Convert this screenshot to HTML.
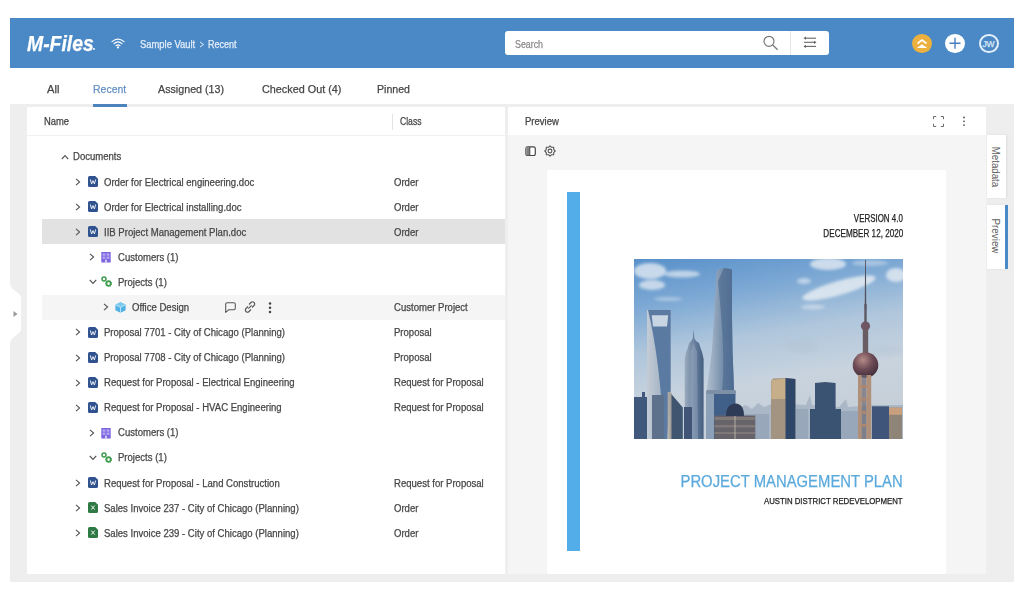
<!DOCTYPE html>
<html><head><meta charset="utf-8">
<style>
*{margin:0;padding:0;box-sizing:border-box}
html,body{width:1024px;height:594px;overflow:hidden;background:#fff;font-family:"Liberation Sans",sans-serif;color:#333}
.a{position:absolute;white-space:nowrap;-webkit-text-stroke:0.25px currentColor}
</style></head><body>
<div class="a" style="left:10px;top:18px;width:1004px;height:49.8px;background:#4b89c6"></div>
<div class="a" style="left:27px;top:31px;height:26px;line-height:26px;font-size:22px;font-weight:bold;font-style:italic;color:#fff;transform:scaleX(0.88);transform-origin:0 50%">M-Files</div>
<div class="a" style="left:93px;top:48px;width:2px;height:2px;border-radius:1px;background:#fff"></div>
<svg class="a" style="left:111px;top:38px" width="14" height="11" viewBox="0 0 14 11"><g fill="none" stroke="#fff" stroke-width="1.2" stroke-linecap="round"><path d="M1 3.6 Q7 -1.4 13 3.6"/><path d="M3 5.6 Q7 2.2 11 5.6"/><path d="M5 7.6 Q7 6 9 7.6"/></g><circle cx="7" cy="9.4" r="1.1" fill="#fff"/></svg>
<div class="a" style="left:140px;top:34.8px;height:20px;line-height:20px;font-size:10px;color:#e3edf8;font-weight:normal;transform:scaleX(0.94);transform-origin:0 50%;">Sample Vault</div>
<svg class="a" style="left:199px;top:41px" width="6" height="7" viewBox="0 0 6 7"><path d="M1 1 L4.6 3.5 L1 6" fill="none" stroke="#e3edf8" stroke-width="1"/></svg><div class="a" style="left:208px;top:34.8px;height:20px;line-height:20px;font-size:10px;color:#e3edf8;font-weight:normal;transform:scaleX(0.9);transform-origin:0 50%;">Recent</div>

<div class="a" style="left:505px;top:31px;width:324px;height:24px;background:#fff;border-radius:3px"></div>
<div class="a" style="left:515px;top:34.7px;height:20px;line-height:20px;font-size:10px;color:#8a8a8a;font-weight:normal;transform:scaleX(0.885);transform-origin:0 50%;">Search</div>

<svg class="a" style="left:762px;top:35px" width="17" height="16" viewBox="0 0 17 16"><circle cx="7" cy="6.3" r="5" fill="none" stroke="#777" stroke-width="1.2"/><path d="M10.6 9.9 L15.6 14.8" stroke="#777" stroke-width="1.3"/></svg>
<div class="a" style="left:790px;top:31px;width:1px;height:24px;background:#e6e6e6"></div>
<svg class="a" style="left:803px;top:36px" width="14" height="13" viewBox="0 0 14 13"><g stroke="#666" stroke-width="1.1" fill="#666"><path d="M1.5 2.2 H13"/><path d="M1 6.3 H12.5"/><path d="M1.5 10.4 H13"/></g><g fill="#666"><path d="M0.5 2.2 L3 0.6 V3.8Z"/><path d="M13.5 6.3 L11 4.7 V7.9Z"/><path d="M0.5 10.4 L3 8.8 V12Z"/></g></svg>
<div class="a" style="left:912px;top:33.5px;width:20px;height:19.5px;border-radius:50%;background:#ebb03e"></div>
<svg class="a" style="left:912px;top:33.5px" width="20" height="20" viewBox="0 0 20 20"><path d="M5.5 9.5 L10 6 L14.5 9.5" fill="none" stroke="#fff" stroke-width="1.6"/><path d="M4.8 14 L10 10.2 L15.2 14Z" fill="#fff"/></svg>
<div class="a" style="left:945px;top:33.5px;width:20px;height:19.5px;border-radius:50%;background:#fff"></div>
<svg class="a" style="left:945px;top:33.3px" width="20" height="20" viewBox="0 0 20 20"><path d="M4.5 10.3 H15.5 M10 4.8 V15.8" stroke="#4a7fbf" stroke-width="1.4"/></svg>
<div class="a" style="left:978.5px;top:33.5px;width:20px;height:19.5px;border-radius:50%;border:2px solid #e2eefa"></div>
<div class="a" style="left:978.5px;top:33.5px;width:20px;height:20px;line-height:20px;text-align:center;font-size:8.5px;color:#dce9f6;letter-spacing:-0.2px">JW</div>

<div class="a" style="left:47px;top:79px;height:20px;line-height:20px;font-size:11.4px;color:#444;font-weight:normal;transform:scaleX(0.98);transform-origin:0 50%;">All</div>

<div class="a" style="left:93px;top:79px;height:20px;line-height:20px;font-size:11.4px;color:#6591c4;font-weight:normal;transform:scaleX(0.92);transform-origin:0 50%;">Recent</div>

<div class="a" style="left:158px;top:79px;height:20px;line-height:20px;font-size:11.4px;color:#444;font-weight:normal;transform:scaleX(0.94);transform-origin:0 50%;">Assigned (13)</div>

<div class="a" style="left:262px;top:79px;height:20px;line-height:20px;font-size:11.4px;color:#444;font-weight:normal;transform:scaleX(0.95);transform-origin:0 50%;">Checked Out (4)</div>

<div class="a" style="left:377px;top:79px;height:20px;line-height:20px;font-size:11.4px;color:#444;font-weight:normal;transform:scaleX(0.93);transform-origin:0 50%;">Pinned</div>


<div class="a" style="left:10px;top:104px;width:1004px;height:478px;background:#eeeeee"></div>
<div class="a" style="left:93px;top:104px;width:34px;height:2.7px;background:#4c83bd"></div>
<svg class="a" style="left:10px;top:283px" width="11" height="61" viewBox="0 0 11 61"><path d="M0 0 Q0 4 4 7 L9 11 Q11 12.5 11 15 V46 Q11 48.5 9 50 L4 54 Q0 57 0 61Z" fill="#fff"/><path d="M3.5 28 L7.5 31 L3.5 34Z" fill="#999"/></svg>

<div class="a" style="left:27px;top:107px;width:478px;height:467px;background:#fff"></div>
<div class="a" style="left:44px;top:112px;height:20px;line-height:20px;font-size:10px;color:#444;font-weight:normal;transform:scaleX(0.94);transform-origin:0 50%;">Name</div>

<div class="a" style="left:392px;top:114px;width:1px;height:16px;background:#e4e4e4"></div>
<div class="a" style="left:400px;top:112px;height:20px;line-height:20px;font-size:10px;color:#444;font-weight:normal;transform:scaleX(0.86);transform-origin:0 50%;">Class</div>

<div class="a" style="left:27px;top:135px;width:478px;height:1px;background:#f2f2f2"></div>
<div class="a" style="left:42px;top:219px;width:463px;height:25px;background:#e2e2e2"></div><div class="a" style="left:42px;top:294.5px;width:463px;height:25.5px;background:#f5f5f5"></div><svg class="a" style="left:61px;top:153.5px" width="8" height="6" viewBox="0 0 8 6"><path d="M0.8 5 L4 1.6 L7.2 5" fill="none" stroke="#555" stroke-width="1.1"/></svg><div class="a" style="left:73px;top:144.46px;height:25px;line-height:25px;font-size:10px;color:#464646;font-weight:normal;transform:scaleX(0.955);transform-origin:0 50%;">Documents</div>
<svg class="a" style="left:74.8px;top:177.9px" width="6" height="8" viewBox="0 0 6 8"><path d="M1 0.8 L4.6 4 L1 7.2" fill="none" stroke="#555" stroke-width="1.1"/></svg><svg class="a" style="left:87.7px;top:176.04000000000002px" width="10" height="11" viewBox="0 0 10 11"><path d="M1.6 0 H7.2 L10 2.8 V9.4 Q10 11 8.4 11 H1.6 Q0 11 0 9.4 V1.6 Q0 0 1.6 0Z" fill="#30528f"/><path d="M2.3 3.4 L3.6 8 L5 4.6 L6.4 8 L7.7 3.4" fill="none" stroke="#e9eef7" stroke-width="1" stroke-linejoin="miter"/></svg><div class="a" style="left:103.6px;top:169.54000000000002px;height:25px;line-height:25px;font-size:10px;color:#464646;font-weight:normal;transform:scaleX(0.955);transform-origin:0 50%;">Order for Electrical engineering.doc</div>
<div class="a" style="left:394px;top:169.54000000000002px;height:25px;line-height:25px;font-size:10px;color:#464646;font-weight:normal;transform:scaleX(0.955);transform-origin:0 50%;">Order</div>
<svg class="a" style="left:74.8px;top:203.0px" width="6" height="8" viewBox="0 0 6 8"><path d="M1 0.8 L4.6 4 L1 7.2" fill="none" stroke="#555" stroke-width="1.1"/></svg><svg class="a" style="left:87.7px;top:201.12px" width="10" height="11" viewBox="0 0 10 11"><path d="M1.6 0 H7.2 L10 2.8 V9.4 Q10 11 8.4 11 H1.6 Q0 11 0 9.4 V1.6 Q0 0 1.6 0Z" fill="#30528f"/><path d="M2.3 3.4 L3.6 8 L5 4.6 L6.4 8 L7.7 3.4" fill="none" stroke="#e9eef7" stroke-width="1" stroke-linejoin="miter"/></svg><div class="a" style="left:103.6px;top:194.62px;height:25px;line-height:25px;font-size:10px;color:#464646;font-weight:normal;transform:scaleX(0.955);transform-origin:0 50%;">Order for Electrical installing.doc</div>
<div class="a" style="left:394px;top:194.62px;height:25px;line-height:25px;font-size:10px;color:#464646;font-weight:normal;transform:scaleX(0.955);transform-origin:0 50%;">Order</div>
<svg class="a" style="left:74.8px;top:228.1px" width="6" height="8" viewBox="0 0 6 8"><path d="M1 0.8 L4.6 4 L1 7.2" fill="none" stroke="#555" stroke-width="1.1"/></svg><svg class="a" style="left:87.7px;top:226.2px" width="10" height="11" viewBox="0 0 10 11"><path d="M1.6 0 H7.2 L10 2.8 V9.4 Q10 11 8.4 11 H1.6 Q0 11 0 9.4 V1.6 Q0 0 1.6 0Z" fill="#30528f"/><path d="M2.3 3.4 L3.6 8 L5 4.6 L6.4 8 L7.7 3.4" fill="none" stroke="#e9eef7" stroke-width="1" stroke-linejoin="miter"/></svg><div class="a" style="left:103.6px;top:219.7px;height:25px;line-height:25px;font-size:10px;color:#464646;font-weight:normal;transform:scaleX(0.955);transform-origin:0 50%;">IIB Project Management Plan.doc</div>
<div class="a" style="left:394px;top:219.7px;height:25px;line-height:25px;font-size:10px;color:#464646;font-weight:normal;transform:scaleX(0.955);transform-origin:0 50%;">Order</div>
<svg class="a" style="left:88.8px;top:253.2px" width="6" height="8" viewBox="0 0 6 8"><path d="M1 0.8 L4.6 4 L1 7.2" fill="none" stroke="#555" stroke-width="1.1"/></svg><svg class="a" style="left:100.7px;top:252.18px" width="10" height="11" viewBox="0 0 10 11"><rect x="0.3" y="0" width="9.4" height="10.5" rx="0.6" fill="#7d65e0"/><rect x="1.6" y="1.5" width="2.8" height="2.2" fill="#b9abf2"/><rect x="1.6" y="4.6" width="2.8" height="2.2" fill="#b9abf2"/><rect x="5.6" y="1.5" width="2.8" height="2.2" fill="#b9abf2"/><rect x="5.6" y="4.6" width="2.8" height="2.2" fill="#b9abf2"/><rect x="4.2" y="7.6" width="1.6" height="2.9" fill="#e6e0fb"/></svg><div class="a" style="left:117.6px;top:244.78px;height:25px;line-height:25px;font-size:10px;color:#464646;font-weight:normal;transform:scaleX(0.955);transform-origin:0 50%;">Customers (1)</div>
<svg class="a" style="left:88.5px;top:279.3px" width="8" height="6" viewBox="0 0 8 6"><path d="M0.8 1 L4 4.4 L7.2 1" fill="none" stroke="#555" stroke-width="1.1"/></svg><svg class="a" style="left:101px;top:276.16px" width="11" height="11" viewBox="0 0 11 11"><circle cx="3" cy="3" r="2" fill="none" stroke="#3f9c4c" stroke-width="1.5"/><circle cx="7.6" cy="7.6" r="2.2" fill="none" stroke="#3f9c4c" stroke-width="1.7"/><circle cx="7.6" cy="7.6" r="3.1" fill="none" stroke="#3f9c4c" stroke-width="1" stroke-dasharray="1.1 1.1"/></svg><div class="a" style="left:117.6px;top:269.86px;height:25px;line-height:25px;font-size:10px;color:#464646;font-weight:normal;transform:scaleX(0.955);transform-origin:0 50%;">Projects (1)</div>
<svg class="a" style="left:102.8px;top:303.3px" width="6" height="8" viewBox="0 0 6 8"><path d="M1 0.8 L4.6 4 L1 7.2" fill="none" stroke="#555" stroke-width="1.1"/></svg><svg class="a" style="left:115px;top:301.9px" width="11" height="11" viewBox="0 0 11 11"><path d="M5.5 0.2 L10.6 2.7 V8.3 L5.5 10.8 L0.4 8.3 V2.7Z" fill="#4fb0e3"/><path d="M5.5 0.2 L10.6 2.7 L5.5 5.3 L0.4 2.7Z" fill="#7ccaf0"/><path d="M0.6 2.8 L5.5 5.3 L10.4 2.8 M5.5 5.3 V10.6" fill="none" stroke="#e8f6fd" stroke-width="0.7"/></svg><div class="a" style="left:131.6px;top:294.94px;height:25px;line-height:25px;font-size:10px;color:#464646;font-weight:normal;transform:scaleX(0.955);transform-origin:0 50%;">Office Design</div>
<div class="a" style="left:394px;top:294.94px;height:25px;line-height:25px;font-size:10px;color:#464646;font-weight:normal;transform:scaleX(0.955);transform-origin:0 50%;">Customer Project</div>
<svg class="a" style="left:74.8px;top:328.4px" width="6" height="8" viewBox="0 0 6 8"><path d="M1 0.8 L4.6 4 L1 7.2" fill="none" stroke="#555" stroke-width="1.1"/></svg><svg class="a" style="left:87.7px;top:326.52px" width="10" height="11" viewBox="0 0 10 11"><path d="M1.6 0 H7.2 L10 2.8 V9.4 Q10 11 8.4 11 H1.6 Q0 11 0 9.4 V1.6 Q0 0 1.6 0Z" fill="#30528f"/><path d="M2.3 3.4 L3.6 8 L5 4.6 L6.4 8 L7.7 3.4" fill="none" stroke="#e9eef7" stroke-width="1" stroke-linejoin="miter"/></svg><div class="a" style="left:103.6px;top:320.02px;height:25px;line-height:25px;font-size:10px;color:#464646;font-weight:normal;transform:scaleX(0.955);transform-origin:0 50%;">Proposal 7701 - City of Chicago (Planning)</div>
<div class="a" style="left:394px;top:320.02px;height:25px;line-height:25px;font-size:10px;color:#464646;font-weight:normal;transform:scaleX(0.955);transform-origin:0 50%;">Proposal</div>
<svg class="a" style="left:74.8px;top:353.5px" width="6" height="8" viewBox="0 0 6 8"><path d="M1 0.8 L4.6 4 L1 7.2" fill="none" stroke="#555" stroke-width="1.1"/></svg><svg class="a" style="left:87.7px;top:351.6px" width="10" height="11" viewBox="0 0 10 11"><path d="M1.6 0 H7.2 L10 2.8 V9.4 Q10 11 8.4 11 H1.6 Q0 11 0 9.4 V1.6 Q0 0 1.6 0Z" fill="#30528f"/><path d="M2.3 3.4 L3.6 8 L5 4.6 L6.4 8 L7.7 3.4" fill="none" stroke="#e9eef7" stroke-width="1" stroke-linejoin="miter"/></svg><div class="a" style="left:103.6px;top:345.1px;height:25px;line-height:25px;font-size:10px;color:#464646;font-weight:normal;transform:scaleX(0.955);transform-origin:0 50%;">Proposal 7708 - City of Chicago (Planning)</div>
<div class="a" style="left:394px;top:345.1px;height:25px;line-height:25px;font-size:10px;color:#464646;font-weight:normal;transform:scaleX(0.955);transform-origin:0 50%;">Proposal</div>
<svg class="a" style="left:74.8px;top:378.6px" width="6" height="8" viewBox="0 0 6 8"><path d="M1 0.8 L4.6 4 L1 7.2" fill="none" stroke="#555" stroke-width="1.1"/></svg><svg class="a" style="left:87.7px;top:376.67999999999995px" width="10" height="11" viewBox="0 0 10 11"><path d="M1.6 0 H7.2 L10 2.8 V9.4 Q10 11 8.4 11 H1.6 Q0 11 0 9.4 V1.6 Q0 0 1.6 0Z" fill="#30528f"/><path d="M2.3 3.4 L3.6 8 L5 4.6 L6.4 8 L7.7 3.4" fill="none" stroke="#e9eef7" stroke-width="1" stroke-linejoin="miter"/></svg><div class="a" style="left:103.6px;top:370.17999999999995px;height:25px;line-height:25px;font-size:10px;color:#464646;font-weight:normal;transform:scaleX(0.955);transform-origin:0 50%;">Request for Proposal - Electrical Engineering</div>
<div class="a" style="left:394px;top:370.17999999999995px;height:25px;line-height:25px;font-size:10px;color:#464646;font-weight:normal;transform:scaleX(0.955);transform-origin:0 50%;">Request for Proposal</div>
<svg class="a" style="left:74.8px;top:403.7px" width="6" height="8" viewBox="0 0 6 8"><path d="M1 0.8 L4.6 4 L1 7.2" fill="none" stroke="#555" stroke-width="1.1"/></svg><svg class="a" style="left:87.7px;top:401.76px" width="10" height="11" viewBox="0 0 10 11"><path d="M1.6 0 H7.2 L10 2.8 V9.4 Q10 11 8.4 11 H1.6 Q0 11 0 9.4 V1.6 Q0 0 1.6 0Z" fill="#30528f"/><path d="M2.3 3.4 L3.6 8 L5 4.6 L6.4 8 L7.7 3.4" fill="none" stroke="#e9eef7" stroke-width="1" stroke-linejoin="miter"/></svg><div class="a" style="left:103.6px;top:395.26px;height:25px;line-height:25px;font-size:10px;color:#464646;font-weight:normal;transform:scaleX(0.955);transform-origin:0 50%;">Request for Proposal - HVAC Engineering</div>
<div class="a" style="left:394px;top:395.26px;height:25px;line-height:25px;font-size:10px;color:#464646;font-weight:normal;transform:scaleX(0.955);transform-origin:0 50%;">Request for Proposal</div>
<svg class="a" style="left:88.8px;top:428.7px" width="6" height="8" viewBox="0 0 6 8"><path d="M1 0.8 L4.6 4 L1 7.2" fill="none" stroke="#555" stroke-width="1.1"/></svg><svg class="a" style="left:100.7px;top:427.74px" width="10" height="11" viewBox="0 0 10 11"><rect x="0.3" y="0" width="9.4" height="10.5" rx="0.6" fill="#7d65e0"/><rect x="1.6" y="1.5" width="2.8" height="2.2" fill="#b9abf2"/><rect x="1.6" y="4.6" width="2.8" height="2.2" fill="#b9abf2"/><rect x="5.6" y="1.5" width="2.8" height="2.2" fill="#b9abf2"/><rect x="5.6" y="4.6" width="2.8" height="2.2" fill="#b9abf2"/><rect x="4.2" y="7.6" width="1.6" height="2.9" fill="#e6e0fb"/></svg><div class="a" style="left:117.6px;top:420.34000000000003px;height:25px;line-height:25px;font-size:10px;color:#464646;font-weight:normal;transform:scaleX(0.955);transform-origin:0 50%;">Customers (1)</div>
<svg class="a" style="left:88.5px;top:454.8px" width="8" height="6" viewBox="0 0 8 6"><path d="M0.8 1 L4 4.4 L7.2 1" fill="none" stroke="#555" stroke-width="1.1"/></svg><svg class="a" style="left:101px;top:451.71999999999997px" width="11" height="11" viewBox="0 0 11 11"><circle cx="3" cy="3" r="2" fill="none" stroke="#3f9c4c" stroke-width="1.5"/><circle cx="7.6" cy="7.6" r="2.2" fill="none" stroke="#3f9c4c" stroke-width="1.7"/><circle cx="7.6" cy="7.6" r="3.1" fill="none" stroke="#3f9c4c" stroke-width="1" stroke-dasharray="1.1 1.1"/></svg><div class="a" style="left:117.6px;top:445.41999999999996px;height:25px;line-height:25px;font-size:10px;color:#464646;font-weight:normal;transform:scaleX(0.955);transform-origin:0 50%;">Projects (1)</div>
<svg class="a" style="left:74.8px;top:478.9px" width="6" height="8" viewBox="0 0 6 8"><path d="M1 0.8 L4.6 4 L1 7.2" fill="none" stroke="#555" stroke-width="1.1"/></svg><svg class="a" style="left:87.7px;top:477.0px" width="10" height="11" viewBox="0 0 10 11"><path d="M1.6 0 H7.2 L10 2.8 V9.4 Q10 11 8.4 11 H1.6 Q0 11 0 9.4 V1.6 Q0 0 1.6 0Z" fill="#30528f"/><path d="M2.3 3.4 L3.6 8 L5 4.6 L6.4 8 L7.7 3.4" fill="none" stroke="#e9eef7" stroke-width="1" stroke-linejoin="miter"/></svg><div class="a" style="left:103.6px;top:470.5px;height:25px;line-height:25px;font-size:10px;color:#464646;font-weight:normal;transform:scaleX(0.955);transform-origin:0 50%;">Request for Proposal - Land Construction</div>
<div class="a" style="left:394px;top:470.5px;height:25px;line-height:25px;font-size:10px;color:#464646;font-weight:normal;transform:scaleX(0.955);transform-origin:0 50%;">Request for Proposal</div>
<svg class="a" style="left:74.8px;top:504.0px" width="6" height="8" viewBox="0 0 6 8"><path d="M1 0.8 L4.6 4 L1 7.2" fill="none" stroke="#555" stroke-width="1.1"/></svg><svg class="a" style="left:87.7px;top:502.08000000000004px" width="10" height="11" viewBox="0 0 10 11"><path d="M1.6 0 H7.2 L10 2.8 V9.4 Q10 11 8.4 11 H1.6 Q0 11 0 9.4 V1.6 Q0 0 1.6 0Z" fill="#2f7a44"/><path d="M3.3 3.6 L6.7 7.6 M6.7 3.6 L3.3 7.6" fill="none" stroke="#eef6f0" stroke-width="1"/></svg><div class="a" style="left:103.6px;top:495.58000000000004px;height:25px;line-height:25px;font-size:10px;color:#464646;font-weight:normal;transform:scaleX(0.955);transform-origin:0 50%;">Sales Invoice 237 - City of Chicago (Planning)</div>
<div class="a" style="left:394px;top:495.58000000000004px;height:25px;line-height:25px;font-size:10px;color:#464646;font-weight:normal;transform:scaleX(0.955);transform-origin:0 50%;">Order</div>
<svg class="a" style="left:74.8px;top:529.1px" width="6" height="8" viewBox="0 0 6 8"><path d="M1 0.8 L4.6 4 L1 7.2" fill="none" stroke="#555" stroke-width="1.1"/></svg><svg class="a" style="left:87.7px;top:527.16px" width="10" height="11" viewBox="0 0 10 11"><path d="M1.6 0 H7.2 L10 2.8 V9.4 Q10 11 8.4 11 H1.6 Q0 11 0 9.4 V1.6 Q0 0 1.6 0Z" fill="#2f7a44"/><path d="M3.3 3.6 L6.7 7.6 M6.7 3.6 L3.3 7.6" fill="none" stroke="#eef6f0" stroke-width="1"/></svg><div class="a" style="left:103.6px;top:520.66px;height:25px;line-height:25px;font-size:10px;color:#464646;font-weight:normal;transform:scaleX(0.955);transform-origin:0 50%;">Sales Invoice 239 - City of Chicago (Planning)</div>
<div class="a" style="left:394px;top:520.66px;height:25px;line-height:25px;font-size:10px;color:#464646;font-weight:normal;transform:scaleX(0.955);transform-origin:0 50%;">Order</div>
<svg class="a" style="left:225px;top:301.5px" width="11" height="11" viewBox="0 0 11 11"><path d="M2.2 0.8 H8.8 Q10.3 0.8 10.3 2.3 V6.3 Q10.3 7.8 8.8 7.8 H3.6 L0.7 10.4 V2.3 Q0.7 0.8 2.2 0.8Z" fill="none" stroke="#555" stroke-width="1.05" stroke-linejoin="round"/></svg><svg class="a" style="left:244px;top:301.3px" width="12" height="12" viewBox="0 0 12 12"><g fill="none" stroke="#555" stroke-width="1.1"><path d="M5 3.5 L7 1.5 Q8.5 0 10 1.5 Q11.5 3 10 4.5 L8 6.5"/><path d="M7 8.5 L5 10.5 Q3.5 12 2 10.5 Q0.5 9 2 7.5 L4 5.5"/><path d="M4.3 7.7 L7.7 4.3"/></g></svg><svg class="a" style="left:267.6px;top:301.5px" width="4" height="12" viewBox="0 0 4 12"><circle cx="2" cy="1.6" r="1.25" fill="#444"/><circle cx="2" cy="5.8" r="1.25" fill="#444"/><circle cx="2" cy="10" r="1.25" fill="#444"/></svg>

<div class="a" style="left:508px;top:107px;width:478px;height:467px;background:#f5f5f5"></div>
<div class="a" style="left:508px;top:107px;width:478px;height:28px;background:#fff"></div>
<div class="a" style="left:525px;top:112px;height:20px;line-height:20px;font-size:10px;color:#444;font-weight:normal;transform:scaleX(0.95);transform-origin:0 50%;">Preview</div>

<svg class="a" style="left:933.2px;top:115.8px" width="11" height="11" viewBox="0 0 11 11"><g fill="none" stroke="#6a6a6a" stroke-width="1"><path d="M0.5 3.2 V0.5 H3.2"/><path d="M7.8 0.5 H10.5 V3.2"/><path d="M10.5 7.8 V10.5 H7.8"/><path d="M3.2 10.5 H0.5 V7.8"/></g></svg>
<svg class="a" style="left:961.5px;top:116px" width="4" height="11" viewBox="0 0 4 11"><circle cx="2" cy="1.5" r="0.9" fill="#555"/><circle cx="2" cy="5.3" r="0.9" fill="#555"/><circle cx="2" cy="9.1" r="0.9" fill="#555"/></svg>
<svg class="a" style="left:524.5px;top:145.5px" width="11" height="10.5" viewBox="0 0 11 10.5"><rect x="0.9" y="0.9" width="9.4" height="8.7" rx="1.8" fill="#fff" stroke="#444" stroke-width="1.2"/><rect x="1.2" y="1.2" width="3.6" height="8.1" fill="#999"/><path d="M4.8 1 V9.5" stroke="#444" stroke-width="1"/><path d="M2.4 1.5 V9 M3.6 1.5 V9" stroke="#666" stroke-width="0.5"/></svg>
<svg class="a" style="left:544.3px;top:144.5px" width="12" height="12" viewBox="0 0 12 12"><path d="M6.00 0.80 L7.53 2.30 L9.68 2.32 L9.70 4.47 L11.20 6.00 L9.70 7.53 L9.68 9.68 L7.53 9.70 L6.00 11.20 L4.47 9.70 L2.32 9.68 L2.30 7.53 L0.80 6.00 L2.30 4.47 L2.32 2.32 L4.47 2.30Z" fill="none" stroke="#555" stroke-width="1.1" stroke-linejoin="round"/><circle cx="6" cy="6" r="1.9" fill="none" stroke="#555" stroke-width="1.1"/></svg>

<div class="a" style="left:547px;top:170px;width:399px;height:404px;background:#fff"></div>
<div class="a" style="left:567px;top:192px;width:13px;height:359px;background:#52ade8"></div>
<div class="a" style="right:121px;top:208.5px;height:20px;line-height:20px;font-size:10.2px;color:#222;font-weight:normal;transform:scaleX(0.78);transform-origin:100% 50%;">VERSION 4.0</div>

<div class="a" style="right:121px;top:223.8px;height:20px;line-height:20px;font-size:10.2px;color:#222;font-weight:normal;transform:scaleX(0.797);transform-origin:100% 50%;">DECEMBER 12, 2020</div>

<svg class="a" style="left:634px;top:259px" width="269" height="180" viewBox="0 0 269 180">
<defs>
<linearGradient id="sky" x1="0" y1="0" x2="0.25" y2="1">
<stop offset="0" stop-color="#5890ca"/>
<stop offset="0.25" stop-color="#7ca8d4"/>
<stop offset="0.5" stop-color="#afc6dc"/>
<stop offset="0.75" stop-color="#c8d3de"/>
<stop offset="1" stop-color="#c6cfd8"/>
</linearGradient>
<linearGradient id="swfc" x1="0" y1="0" x2="1" y2="0">
<stop offset="0" stop-color="#c3ccd6"/>
<stop offset="1" stop-color="#93a5ba"/>
</linearGradient>
<linearGradient id="sht" x1="0" y1="0" x2="1" y2="0">
<stop offset="0" stop-color="#b0bfce"/>
<stop offset="0.45" stop-color="#8399b3"/>
<stop offset="1" stop-color="#4d6b92"/>
</linearGradient>
<linearGradient id="jm" x1="0" y1="0" x2="1" y2="0">
<stop offset="0" stop-color="#9aabbd"/>
<stop offset="0.5" stop-color="#6a81a0"/>
<stop offset="1" stop-color="#455f80"/>
</linearGradient>
<radialGradient id="sph" cx="0.4" cy="0.3" r="0.75">
<stop offset="0" stop-color="#b48b86"/>
<stop offset="0.5" stop-color="#6e4b56"/>
<stop offset="1" stop-color="#3d2c38"/>
</radialGradient>
<filter id="bl2" x="-20%" y="-50%" width="140%" height="200%"><feGaussianBlur stdDeviation="1.8"/></filter>
<filter id="bl1" x="-5%" y="-5%" width="110%" height="110%"><feGaussianBlur stdDeviation="0.5"/></filter>
</defs>
<rect width="269" height="180" fill="url(#sky)"/>
<g fill="#eef2f6" filter="url(#bl2)" opacity="0.8">
<ellipse cx="16" cy="12" rx="16" ry="8" opacity="0.9"/>
<ellipse cx="18" cy="26" rx="13" ry="5" opacity="0.85"/>
<ellipse cx="48" cy="15" rx="18" ry="3.5" opacity="0.8"/>
<ellipse cx="34" cy="40" rx="14" ry="2" opacity="0.5"/>
<ellipse cx="194" cy="5" rx="18" ry="6" opacity="0.9"/>
<ellipse cx="205" cy="29" rx="38" ry="7" transform="rotate(-16 205 29)" opacity="0.95"/>
<ellipse cx="262" cy="16" rx="10" ry="7" opacity="0.9"/>
<ellipse cx="170" cy="22" rx="7" ry="3" opacity="0.7"/>
<ellipse cx="179" cy="48" rx="12" ry="2.5" opacity="0.6"/>
<ellipse cx="236" cy="4" rx="18" ry="3" opacity="0.5"/>
</g>
<g fill="#aab9c9" opacity="0.18" filter="url(#bl2)">
<ellipse cx="168" cy="88" rx="16" ry="7"/>
<ellipse cx="252" cy="92" rx="18" ry="6"/>
</g>
<g filter="url(#bl1)">
<!-- distant haze city -->
<path d="M100 150 L112 146 L118 150 L124 144 L130 148 L140 144 L172 146 L176 136 L178 146 L205 148 L212 140 L214 148 L240 146 L269 146 V180 H100Z" fill="#a9b7c6"/>
<path d="M110 155 H135 V180 H110Z M162 150 H174 V180 H162Z M206 152 H224 V180 H206Z" fill="#98a8ba"/>
<!-- left low buildings -->
<path d="M0 138 H8 V133 H11 V138 H13 V180 H0Z" fill="#40597c"/>
<!-- SWFC -->
<path d="M13 51 H36.6 V180 H13Z" fill="url(#swfc)"/>
<path d="M14 51 H36.6 V130 L33 180 H30 Q26 100 14 51Z" fill="#5a7aa2"/>
<path d="M17.7 56.3 H34.2 L33 67.4 H19Z" fill="#c8d5e3"/>
<path d="M18 136 H30 V180 H18Z" fill="#5d718c"/>
<!-- slanted dark building right of swfc -->
<path d="M35.6 133 L48.8 148.6 V180 H35.6Z" fill="#3f5470"/>
<path d="M33.6 133 H37.5 V180 H33.6Z" fill="#bdb3a6" opacity="0.8"/>
<!-- Jin Mao -->
<path d="M59.6 70 L60.4 79 L62 82 L65 84 L66.5 89 L68 93 L69.6 100 V180 H50.7 V100 L52.2 93 L53.7 89 L55.2 84 L57.2 82 L58.8 79Z" fill="url(#jm)"/>
<path d="M59.6 84 L63 93 L64 180 H56 L57 93Z" fill="#a8b8ca" opacity="0.35"/>
<path d="M50 148 H58 V180 H50Z" fill="#3f5577"/>
<!-- Shanghai tower -->
<path d="M82.7 11 Q90 8 97.9 10.5 L98 60 L98.5 91 L100 131 H72.8 L78 91 L80 60Z" fill="url(#sht)"/>
<path d="M90 9 L97.9 10.5 L98 60 L98.5 91 L100 131 H88 Q92 100 84 22Z" fill="#4e6c92" opacity="0.7"/>
<path d="M72.5 132 H101.5 V180 H72.5Z" fill="#41608a"/>
<path d="M72.5 132 H80 V180 H72.5Z" fill="#9fb0c2" opacity="0.8"/>
<path d="M72.5 131 H101.5 V135 H72.5Z" fill="#7d90a6"/>
<!-- dome building -->
<path d="M80.4 180 V156.5 H121.3 V180Z" fill="#66636a"/>
<path d="M92 157 Q92 145 101.5 144.6 Q110 145 110 157Z" fill="#2f3b56"/>
<path d="M80.4 158 H121.3 V161 H80.4Z M80.4 166 H121.3 V168.5 H80.4Z M80.4 173 H121.3 V175 H80.4Z" fill="#b9aa92" opacity="0.3"/>
<path d="M100 157 H102 V180 H100Z" fill="#c8c0b2" opacity="0.4"/>
<!-- gold top tower -->
<path d="M137 180 V122 L139 119.6 L151.5 119 L161.4 120 V180Z" fill="#a39482"/>
<path d="M137.5 121 L151.5 119.6 V140 H137.2Z" fill="#c9b08a" opacity="0.9"/>
<path d="M151.5 119 L161.4 120 V180 H151.5Z" fill="#2f4669"/>
<!-- mid building -->
<path d="M176 180 V150 H181 V124 L191 123 L201.6 124 V150 H207 V180Z" fill="#3b5273"/>
<!-- Pearl tower -->
<path d="M231.1 1 H231.9 L232.3 50 H230.7Z" fill="#55525e"/>
<path d="M230.3 45 H232.7 V64 H230.3Z" fill="#5e5864"/>
<circle cx="231.5" cy="67" r="4.6" fill="#6e5764"/>
<path d="M228.8 71 H234.2 V95 H228.8Z" fill="#6b5c64"/>
<circle cx="231.5" cy="106" r="12.8" fill="url(#sph)"/>
<path d="M227.3 116 H232.6 V180 H227.3Z" fill="#6d6670" opacity="0.7"/>
<path d="M224 116 H227.5 V180 H224Z M232.6 116 H237.2 V180 H232.6Z" fill="#b09078"/>
<path d="M227.3 126 H232.6 V129 H227.3Z M227.3 139 H232.6 V142 H227.3Z M227.3 152 H232.6 V155 H227.3Z M227.3 165 H232.6 V168 H227.3Z" fill="#a88670"/>
<!-- right buildings -->
<path d="M238 147.3 H255 V180 H238Z" fill="#40557a"/>
<path d="M255 148.6 H268 V180 H255Z" fill="#8f8478"/>
<path d="M255 148.6 H268 V155.8 H255Z" fill="#c8a07e"/>
</g>
</svg>

<div class="a" style="right:121px;top:471.3px;height:22px;line-height:22px;font-size:16.7px;color:#5aa9dc;font-weight:normal;transform:scaleX(0.89);transform-origin:100% 50%;">PROJECT MANAGEMENT PLAN</div>

<div class="a" style="right:121px;top:490.5px;height:20px;line-height:20px;font-size:8.9px;color:#222;font-weight:normal;transform:scaleX(0.88);transform-origin:100% 50%;">AUSTIN DISTRICT REDEVELOPMENT</div>


<div class="a" style="left:987px;top:135px;width:19px;height:63px;background:#fff;box-shadow:1px 0 2px rgba(0,0,0,0.08)"></div>
<div class="a" style="left:987px;top:204.5px;width:19px;height:64px;background:#fff;box-shadow:1px 0 2px rgba(0,0,0,0.08)"></div>
<div class="a" style="left:1005px;top:204.5px;width:2.5px;height:64px;background:#4a89c8"></div>
<div class="a" style="left:974px;top:157.4px;width:42px;height:20px;line-height:20px;font-size:10px;color:#606060;-webkit-text-stroke:0;transform:rotate(90deg) scaleX(0.97);transform-origin:50% 50%;text-align:center">Metadata</div>
<div class="a" style="left:974px;top:226.3px;width:42px;height:20px;line-height:20px;font-size:10px;color:#606060;-webkit-text-stroke:0;transform:rotate(90deg) scaleX(0.98);transform-origin:50% 50%;text-align:center">Preview</div>
</body></html>
